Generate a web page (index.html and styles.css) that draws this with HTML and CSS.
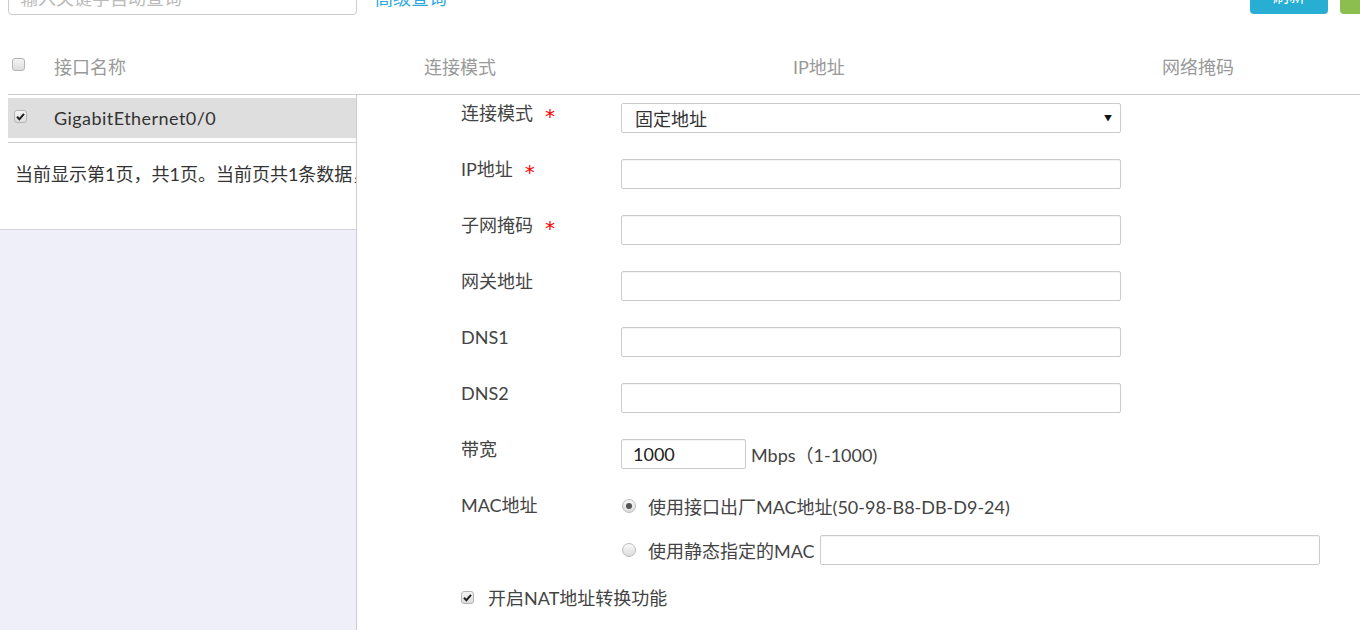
FILE: index.html
```html
<!DOCTYPE html>
<html lang="zh-CN">
<head>
<meta charset="utf-8">
<title>接口设置</title>
<link rel="stylesheet" href="styles.css">
</head>
<body>
<div class="toolbar">
  <div class="search">输入关键字自动查询</div>
  <a class="adv">高级查询</a>
  <div class="spacer"></div>
  <div class="btn btn-blue">刷新</div>
  <div class="btn btn-green">新建</div>
</div>

<div class="thead">
  <div class="th th-check"><span class="cb"></span></div>
  <div class="th">接口名称</div>
  <div class="th">连接模式</div>
  <div class="th">IP地址</div>
  <div class="th">网络掩码</div>
</div>

<div class="main">
  <div class="left">
    <div class="left-top">
      <div class="row-sel">
        <span class="cb cb-on"><svg viewBox="0 0 13 13" width="13" height="13"><path d="M3 6.8 L5.4 9.2 L10 3.8" fill="none" stroke="#222" stroke-width="2"/></svg></span>
        <span class="row-name">GigabitEthernet0/0</span>
      </div>
      <div class="pager">当前显示第1页，共1页。当前页共1条数据，</div>
    </div>
    <div class="left-bottom"></div>
  </div>

  <div class="panel">
    <div class="frow">
      <div class="flabel">连接模式<span class="req">*</span></div>
      <div class="select"><span>固定地址</span><span class="arrow">▼</span></div>
    </div>
    <div class="frow">
      <div class="flabel">IP地址<span class="req">*</span></div>
      <div class="input"></div>
    </div>
    <div class="frow">
      <div class="flabel">子网掩码<span class="req">*</span></div>
      <div class="input"></div>
    </div>
    <div class="frow">
      <div class="flabel">网关地址</div>
      <div class="input"></div>
    </div>
    <div class="frow">
      <div class="flabel">DNS1</div>
      <div class="input"></div>
    </div>
    <div class="frow">
      <div class="flabel">DNS2</div>
      <div class="input"></div>
    </div>
    <div class="frow">
      <div class="flabel">带宽</div>
      <div class="bw">
        <div class="input input-short">1000</div>
        <span class="unit">Mbps（1-1000)</span>
      </div>
    </div>
    <div class="frow frow-mac">
      <div class="flabel">MAC地址</div>
      <div class="opts">
        <div class="opt opt1"><span class="radio radio-on"></span><span>使用接口出厂MAC地址(50-98-B8-DB-D9-24)</span></div>
        <div class="opt opt2"><span class="radio"></span><span>使用静态指定的MAC</span><div class="input input-mac"></div></div>
      </div>
    </div>
    <div class="nat">
      <span class="cb cb-on"><svg viewBox="0 0 13 13" width="13" height="13"><path d="M3 6.8 L5.4 9.2 L10 3.8" fill="none" stroke="#222" stroke-width="2"/></svg></span>
      <span>开启NAT地址转换功能</span>
    </div>
  </div>
</div>
</body>
</html>
```

FILE: styles.css
```css
html, body {
  margin: 0;
  padding: 0;
  width: 1360px;
  height: 630px;
  overflow: hidden;
  background: #fff;
  font-family: "Lato", "Noto Sans CJK SC", sans-serif;
  font-size: 18px;
  color: #333;
}

.toolbar {
  height: 15px;
  display: flex;
  align-items: flex-end;
  overflow: hidden;
  padding-left: 8px;
}
.search {
  flex: none;
  box-sizing: border-box;
  width: 349px;
  height: 34px;
  border: 1px solid #ccc;
  border-radius: 4px;
  padding-left: 11px;
  color: #bbb;
  line-height: 32px;
}
.adv {
  flex: none;
  margin-left: 18px;
  color: #2ea9dd;
  line-height: 32px;
  height: 34px;
  margin-bottom: -1px;
}
.spacer { flex: 1; }
.btn {
  flex: none;
  height: 34px;
  border-radius: 4px;
  color: #fff;
  text-align: center;
  line-height: 32px;
  font-size: 16px;
  margin-bottom: 1px;
}
.btn-blue {
  width: 78px;
  background: #29aed3;
}
.btn-green {
  width: 60px;
  margin-left: 12px;
  margin-right: -40px;
  background: #8bbd4f;
  color: #8bbd4f;
}

.thead {
  margin-top: 25px;
  margin-left: 8px;
  height: 54px;
  border-bottom: 1px solid #ccc;
  display: grid;
  grid-template-columns: 46px 370px 369px 369px 369px;
  align-items: center;
  color: #999;
  overflow: hidden;
}
.th { white-space: nowrap; line-height: 22px; }
.th-check { padding-left: 4px; display: flex; align-items: center; margin-top: -5px; }

.cb {
  display: inline-block;
  box-sizing: border-box;
  width: 13px;
  height: 13px;
  border: 1px solid #b5b5b5;
  border-radius: 3px;
  background: linear-gradient(#f4f4f4, #dcdcdc);
  flex: none;
  position: relative;
}
.cb svg { display: block; position: absolute; left: -1px; top: -1px; }

.main {
  display: flex;
  height: 535px;
}
.left {
  width: 356px;
  border-right: 1px solid #ccc;
  display: flex;
  flex-direction: column;
  flex: none;
}
.left-top {
  padding: 3px 0 0 8px;
}
.row-sel {
  height: 40px;
  background: #dedede;
  display: flex;
  align-items: center;
  padding-left: 6px;
  margin-bottom: 4px;
}
.row-sel .cb { margin-top: -4px; }
.row-name {
  margin-left: 27px;
  color: #333;
  line-height: 22px;
  letter-spacing: 0.45px;
  white-space: nowrap;
}
.pager {
  border-top: 1px solid #ccc;
  padding-left: 7px;
  padding-top: 20px;
  height: 66px;
  line-height: 22px;
  white-space: nowrap;
  overflow: hidden;
}
.left-bottom {
  flex: 1;
  border-top: 1px solid #d4d4d4;
  background: #eeeff8;
}

.panel {
  flex: 1;
  padding: 8px 0 0 104px;
  color: #444;
}
.frow {
  display: flex;
  align-items: flex-start;
  margin-bottom: 26px;
}
.flabel {
  width: 160px;
  flex: none;
  line-height: 20px;
  white-space: nowrap;
  display: flex;
  align-items: flex-start;
}
.req {
  color: #f00;
  margin-left: 12px;
  font-family: "DejaVu Sans", sans-serif;
  font-size: 20px;
  line-height: 20px;
  position: relative;
  top: 3px;
}
.input, .select {
  box-sizing: border-box;
  width: 500px;
  height: 30px;
  border: 1px solid #ccc;
  border-radius: 2px;
  box-shadow: inset 0 1px 1px rgba(0,0,0,0.05);
  background: #fff;
}
.select {
  display: flex;
  align-items: center;
  justify-content: space-between;
  padding: 0 8px 0 13px;
  color: #333;
  box-shadow: none;
}
.arrow { font-size: 8px; color: #111; margin-top: -1px; }
.bw {
  display: flex;
  align-items: center;
}
.input-short {
  width: 125px;
  padding-left: 11px;
  line-height: 28px;
  color: #222;
}
.unit { margin-left: 5px; color: #444; }

.frow-mac { margin-bottom: 0; margin-top: 0; }
.opts { display: flex; flex-direction: column; }
.opt {
  display: flex;
  align-items: center;
  white-space: nowrap;
}
.opt1 { height: 22px; }
.opt2 { margin-top: 18px; height: 30px; }
.radio {
  box-sizing: border-box;
  width: 14px;
  height: 14px;
  border-radius: 50%;
  border: 1px solid #bbb;
  background: linear-gradient(#f8f8f8, #dcdcdc);
  margin-left: 1px;
  margin-right: 12px;
  position: relative;
  flex: none;
}
.radio-on::after {
  content: "";
  position: absolute;
  left: 3px;
  top: 3px;
  width: 6px;
  height: 6px;
  border-radius: 50%;
  background: #555;
}
.input-mac { width: 500px; margin-left: 5px; }

.nat {
  margin-top: 22px;
  display: flex;
  align-items: center;
  height: 20px;
  color: #444;
}
.nat .cb { margin-right: 14px; }
```
